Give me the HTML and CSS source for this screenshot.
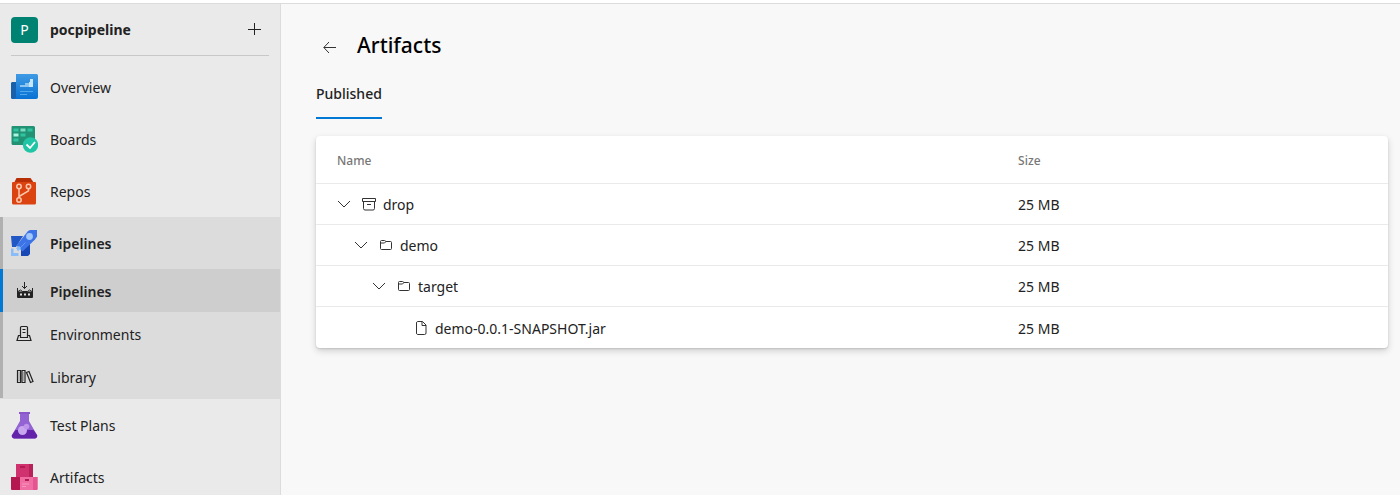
FILE: index.html
```html
<!DOCTYPE html>
<html lang="en">
<head>
    <meta charset="UTF-8">
    <meta name="viewport" content="width=device-width, initial-scale=1">
    <title>Artifacts - pocpipeline</title>
    <link rel="stylesheet" href="styles.css">
</head>
<body>

<div class="topbar"></div>
<div class="page">
    <nav class="sidebar">
        <div class="project">
            <span class="project-logo">P</span>
            <a class="project-name" href="#">pocpipeline</a>
            <button class="icon-button add" type="button" aria-label="Add">
                <svg width="14" height="14" viewBox="0 0 14 14" fill="none" stroke="#222"><path d="M7.5 1v12M1 7.5h13"/></svg>
            </button>
        </div>

        <a class="item" href="#">
            <svg class="item-icon" viewBox="0 1 27 27">
                <defs><linearGradient id="blue" x1="0" y1="0" x2="0" y2="1"><stop offset="0" stop-color="#3f9ae3"/><stop offset="1" stop-color="#0a72d4"/></linearGradient></defs>
                <path d="M2 9h5v17H2a1.500 1.500 0 0 1-2-1.500V10.500A1.500 1.500 0 0 1 2 9z" fill="#1660ac"/>
                <path d="M5 1h20.500a1.500 1.500 0 0 1 1.500 1.500V24a2 2 0 0 1-2 2H2.500C4 26 5 25 5 23.500z" fill="url(#blue)"/>
                <path d="M9 14v-2h5v-2h4v4z" fill="#8cc5f2"/><path d="M18 14V9h1V6h3v8z" fill="#c6e6fd"/>
                <path d="M9 18.500h13M9 21.500h7" stroke="#4fa9ec"/>
            </svg>
            Overview
        </a>
        <a class="item" href="#">
            <svg class="item-icon" viewBox="0 0 27 27">
                <path d="M1.500 0h21A1.500 1.500 0 0 1 24 1.500V19H2a1.500 1.500 0 0 1-1.500-1.500V1A1 1 0 0 1 1.500 0z" fill="#219274"/>
                <path d="M2.500 2.500h5v3h-5zM16.500 2.500h5v3h-5zM9.500 7.500h5v3h-5zM2.500 12.500h5v3h-5z" fill="#2fc3a0"/>
                <path d="M9.500 2.500h5v3h-5z" fill="#78dcc0"/><path d="M2.500 7.500h5v3h-5z" fill="#a5f5df"/>
                <circle cx="19.500" cy="19" r="7.700" fill="#20c5a5"/>
                <path d="M15.500 18.500l3.500 3.500 5-6" fill="none" stroke="#fff" stroke-width="1.800"/>
            </svg>
            Boards
        </a>
        <a class="item" href="#">
            <svg class="item-icon" viewBox="0 0 27 27">
                <path d="M5.500 0h14l3.500 5H3z" fill="#b92f05"/>
                <path d="M2 4h22a1 1 0 0 1 1 1v20a1.500 1.500 0 0 1-1.500 1.500h-21A1.500 1.500 0 0 1 1 25V5a1 1 0 0 1 1-1z" fill="#db4310"/>
                <g fill="none" stroke="#ffc8ae" stroke-width="1.500"><circle cx="8" cy="8.500" r="2.200"/><circle cx="17.500" cy="8.500" r="2.200"/><circle cx="8" cy="22" r="2.200"/><path d="M8 10.700v9.100M17.500 10.700v2.100L8 18.500"/></g>
            </svg>
            Repos
        </a>

        <div class="group">
            <a class="item strong" href="#">
                <svg class="item-icon" viewBox="0 0 27 27">
                    <path d="M0 6h12l-7 11H1z" fill="#2258c6"/>
                    <path d="M19 14v10l-2 2h-7V18z" fill="#1748b5"/>
                    <path d="M17 1l2-1h7v6.500l-2 3L11.500 21.500l-6-6z" fill="#3c73e6"/>
                    <circle cx="18.500" cy="6.500" r="3.400" fill="#a2c7fa"/>
                    <path d="M8.500 18.500l6-6" stroke="#6398f3"/>
                    <path d="M0 18.500h2.500v4.500h5v3H0zM5 18l3-2 2 2-3 3.500z" fill="#8bbcfa"/>
                </svg>
                Pipelines
            </a>
            <a class="item sub strong selected" href="#">
                <svg class="item-icon" viewBox="0 0 27 27" fill="none" stroke="#222">
                    <path d="M13.500 5v6.500M11 9l2.500 2.500L16 9"/>
                    <path d="M6.500 11v9.500h15V11M7 14.500l2.500-1.500 2 1.500h5l2-1.500 2.500 1.500"/>
                    <path d="M7 15h14v5H7z" fill="#222"/>
                    <path d="M9 17.500h2M13 17.500h2M17 17.500h2" stroke="#ddd" stroke-width="2"/>
                </svg>
                Pipelines
            </a>
            <a class="item sub" href="#">
                <svg class="item-icon" viewBox="0 -1 27 27" fill="none" stroke="#222" stroke-width="1.200">
                    <path d="M9.500 16.500V6.500a1 1 0 0 1 1-1h5a1 1 0 0 1 1 1v10zM11.500 8.500h3M11.500 11.500h3M9 14.500H7.500l-1.500 5h14l-1.500-5H17M6 19.500h14"/>
                </svg>
                Environments
            </a>
            <a class="item sub" href="#">
                <svg class="item-icon" viewBox="0 0 27 27" fill="none" stroke="#222" stroke-width="1.200">
                    <path d="M6.500 7.500h3v12h-3zM11 7.500h3v12h-3zM15.500 9.500l2.500-1 4 10-2.500 1z"/>
                    <path d="M8 9v9M12.500 9v9" stroke="#aaa"/>
                </svg>
                Library
            </a>
        </div>

        <a class="item" href="#">
            <svg class="item-icon" viewBox="0 0 27 27">
                <path d="M9 1h9v8l8 14a2.500 2.500 0 0 1-2 3.500H3A2.500 2.500 0 0 1 1 23L9 9z" fill="#9362d3"/>
                <path d="M4.500 18h18l3.500 5a2.500 2.500 0 0 1-2 3.500H3A2.500 2.500 0 0 1 1 23z" fill="#6222aa"/>
                <path d="M8 0h11v2H8z" fill="#8957c9"/>
                <circle cx="11.500" cy="18.500" r="4.500" fill="#c7a5ef"/><circle cx="15.500" cy="14.500" r="2.800" fill="#bd94e9"/>
            </svg>
            Test Plans
        </a>
        <a class="item" href="#">
            <svg class="item-icon" viewBox="0 0 27 27">
                <path d="M5 0h17v14H5z" fill="#d03270"/><path d="M18 0h4v14h-4z" fill="#b82159"/>
                <path d="M0 13h9v13H1a1 1 0 0 1-1-1z" fill="#b51750"/>
                <path d="M9 13h17.500v12a1 1 0 0 1-1 1H9z" fill="#f06da3"/><path d="M22 13h4.500v12a1 1 0 0 1-1 1H22z" fill="#e4558f"/>
                <path d="M9 2h5v2H9zM4 15h4v2H4zM14 15h4v2h-4z" fill="#b11b4e"/><path d="M11 20h7M11 22.500h4" stroke="#fa96bf"/>
            </svg>
            Artifacts
        </a>
    </nav>

    <main class="content">
        <header class="title-bar">
            <button class="icon-button" type="button" aria-label="Back">
                <svg width="14" height="14" viewBox="0 0 14 14" fill="none" stroke="#333"><path d="M13 7.500H1M6 2L.8 7.500 6 13"/></svg>
            </button>
            <h1>Artifacts</h1>
        </header>
        <div class="tabs">
            <a class="tab" href="#">Published</a>
        </div>

        <div class="card">
            <table class="files">
                <thead>
                    <tr><th>Name</th><th class="size">Size</th></tr>
                </thead>
                <tbody>
                    <tr>
                        <td>
                            <div class="node">
                                <svg class="chevron" viewBox="0 0 14 14"><path d="M1 4l6 6 6-6"/></svg>
                                <svg class="file-icon" viewBox="0 0 14 14"><path d="M.5 1.500h13v3H.5zM1.500 4.500v7a1.500 1.500 0 0 0 1.500 1.500h8a1.500 1.500 0 0 0 1.500-1.500v-7M5 7.500h4"/></svg>
                                drop
                            </div>
                        </td>
                        <td class="size">25 MB</td>
                    </tr>
                    <tr>
                        <td>
                            <div class="node level-1">
                                <svg class="chevron" viewBox="0 0 14 14"><path d="M1 4l6 6 6-6"/></svg>
                                <svg class="file-icon" viewBox="0 0 14 14"><path d="M1.500 3.500a1 1 0 0 1 1-1h3l1.500 1h4.500a1 1 0 0 1 1 1v6a1 1 0 0 1-1 1h-9a1 1 0 0 1-1-1zM1.500 5h4L7 3.500"/></svg>
                                demo
                            </div>
                        </td>
                        <td class="size">25 MB</td>
                    </tr>
                    <tr>
                        <td>
                            <div class="node level-2">
                                <svg class="chevron" viewBox="0 0 14 14"><path d="M1 4l6 6 6-6"/></svg>
                                <svg class="file-icon" viewBox="0 0 14 14"><path d="M1.500 3.500a1 1 0 0 1 1-1h3l1.500 1h4.500a1 1 0 0 1 1 1v6a1 1 0 0 1-1 1h-9a1 1 0 0 1-1-1zM1.500 5h4L7 3.500"/></svg>
                                target
                            </div>
                        </td>
                        <td class="size">25 MB</td>
                    </tr>
                    <tr>
                        <td>
                            <div class="node level-3">
                                <span class="chevron"></span>
                                <svg class="file-icon" viewBox="0 0 14 14"><path d="M3.500.5h5l3.500 3.500v8a1.500 1.500 0 0 1-1.500 1.500h-7A1.500 1.500 0 0 1 2.500 12V2a1.500 1.500 0 0 1 1-1.500zM8 .5v4h4"/></svg>
                                demo-0.0.1-SNAPSHOT.jar
                            </div>
                        </td>
                        <td class="size">25 MB</td>
                    </tr>
                </tbody>
            </table>
        </div>
    </main>
</div>

</body>
</html>
```
FILE: styles.css
```css
* {
    box-sizing: border-box;
    margin: 0;
    padding: 0;
}
body {
    display: flex;
    flex-direction: column;
    height: 100vh;
    overflow: hidden;
    background-color: #f8f8f8;
    color: #222;
    font-family: "Noto Sans", "Open Sans", sans-serif;
    font-size: 14px;
    line-height: 20px;
}
a {
    color: inherit;
    text-decoration: none;
}
svg {
    display: block;
    flex: none;
}
.topbar {
    flex: none;
    height: 4px;
    background-color: #fff;
    border-bottom: 1px solid #dcdcdc;
}
.page {
    display: flex;
    flex: 1;
    min-height: 0;
}

/* sidebar */
.sidebar {
    flex: none;
    width: 281px;
    overflow: hidden;
    background-color: #eaeaea;
    border-right: 1px solid #dcdcdc;
}
.project {
    display: flex;
    align-items: center;
    gap: 12px;
    height: 52px;
    margin: 0 11px 5px 11px;
    border-bottom: 1px solid #c8c8c8;
}
.project-logo {
    width: 27px;
    height: 26px;
    border-radius: 4px;
    background-color: #008272;
    color: #fff;
    line-height: 26px;
    text-align: center;
}
.project-name {
    flex: 1;
    font-weight: 700;
}
.icon-button {
    border: none;
    background: none;
}
.add {
    padding: 0 8px 2px 0;
}
.item {
    display: flex;
    align-items: center;
    gap: 12px;
    height: 52px;
    padding: 2px 0 0 11px;
}
.item-icon {
    width: 27px;
    height: 27px;
    margin-bottom: 2px;
}
.group {
    padding-bottom: 1px;
    background-color: #dcdcdc;
}
.group .item {
    padding-left: 8px;
    border-left: 3px solid #b0b0b0;
}
.group .sub {
    height: 43px;
}
.group .selected {
    background-color: #cecece;
    border-left-color: #0078d4;
}
.strong {
    font-weight: 600;
}

/* content */
.content {
    flex: 1;
    min-width: 0;
    padding: 24px 12px 0 35px;
}
.title-bar {
    display: flex;
    align-items: center;
    gap: 20px;
    height: 36px;
    padding-left: 7px;
}
.title-bar .icon-button {
    padding-top: 2px;
}
h1 {
    padding-bottom: 2px;
    color: #000;
    font-size: 21px;
    font-weight: 500;
    line-height: 28px;
}
.tabs {
    display: flex;
    margin: 8px 0 17px;
}
.tab {
    padding: 12px 0 13px;
    border-bottom: 2px solid #0078d4;
    font-weight: 500;
}
.card {
    border-radius: 4px;
    background-color: #fff;
    box-shadow: 0 3px 7px rgba(0, 0, 0, .16), 0 1px 2px rgba(0, 0, 0, .12);
}
.files {
    width: 100%;
    table-layout: fixed;
    border-spacing: 0;
}
th, td {
    height: 41px;
    padding: 2px 0 0 21px;
    border-bottom: 1px solid #eaeaea;
    text-align: left;
}
th {
    height: 48px;
    color: #777;
    font-size: 12px;
    font-weight: 500;
}
tr:last-child td {
    border-bottom: none;
}
th.size, td.size {
    width: 36%;
    padding-left: 16px;
}
.node {
    display: flex;
    align-items: center;
}
.level-1 {
    padding-left: 17px;
}
.level-2 {
    padding-left: 35px;
}
.level-3 {
    padding-left: 52px;
}
.chevron, .file-icon {
    width: 14px;
    height: 14px;
    margin: 0 7px 2px 0;
    fill: none;
    stroke: #333;
}
.chevron {
    margin-right: 11px;
}
```
